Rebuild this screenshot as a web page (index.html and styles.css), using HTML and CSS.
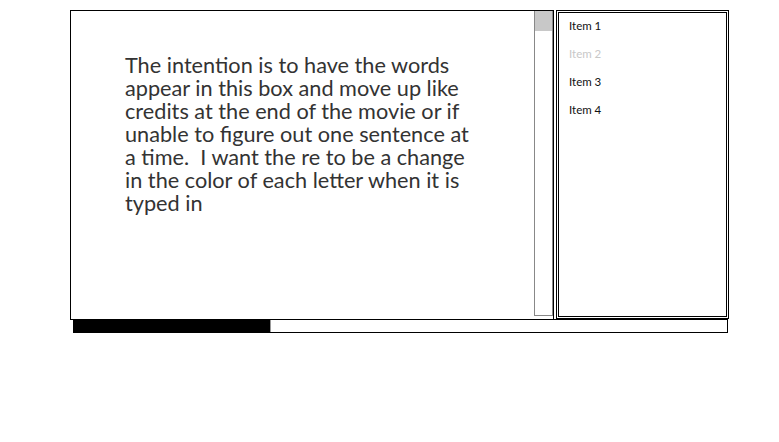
FILE: index.html
```html
<!DOCTYPE html>
<html>
<head>
<meta charset="utf-8">
<link rel="stylesheet" href="styles.css">
</head>
<body>
<div class="wrap">
  <div class="top">
    <div class="main">
      <div class="content">
        <p class="credits">The intention is to have the words appear in this box and move up like credits at the end of the movie or if unable to figure out one sentence at a time.&nbsp; I want the re to be a change in the color of each letter when it is typed in</p>
      </div>
      <div class="scrollbar"><div class="thumb"></div></div>
    </div>
    <ul class="list">
      <li class="item">Item 1</li>
      <li class="item dim">Item 2</li>
      <li class="item">Item 3</li>
      <li class="item">Item 4</li>
    </ul>
  </div>
  <div class="progress"><div class="fill"></div></div>
</div>
</body>
</html>
```

FILE: styles.css
```css
* { box-sizing: border-box; }
html, body { margin: 0; padding: 0; background: #fff; }
body { font-family: "Lato", "Liberation Sans", sans-serif; }
.wrap { padding: 10px 0 0 70px; }
.top { display: flex; height: 310px; }
.main {
  width: 484px;
  border: 1px solid #000;
  display: flex;
}
.content { flex: 1; padding: 43px 0 0 54px; }
.credits {
  margin: 0;
  width: 360px;
  font-size: 21.7px;
  line-height: 23px;
  color: #333;
}
.scrollbar {
  width: 19px;
  margin-bottom: 3px;
  border: 1px solid #888;
  border-top: none;
  background: #fff;
}
.thumb { height: 20px; background: #c8c8c8; }
.list {
  list-style: none;
  margin: 0 0 1px 2px;
  padding: 0 0 0 10px;
  width: 173px;
  border: 3px double #000;
}
.item {
  font-size: 11.5px;
  line-height: 28px;
  color: #111;
}
.item:first-child { margin-top: -1px; }
.item.dim { color: #c8c8c8; }
.progress {
  width: 655px;
  height: 14px;
  margin: -1px 0 0 3px;
  border: 1px solid #000;
}
.fill { width: 198px; height: 13px; margin: -1px 0 0 -1px; background: #000; border-right: 1px solid #999; }
```
